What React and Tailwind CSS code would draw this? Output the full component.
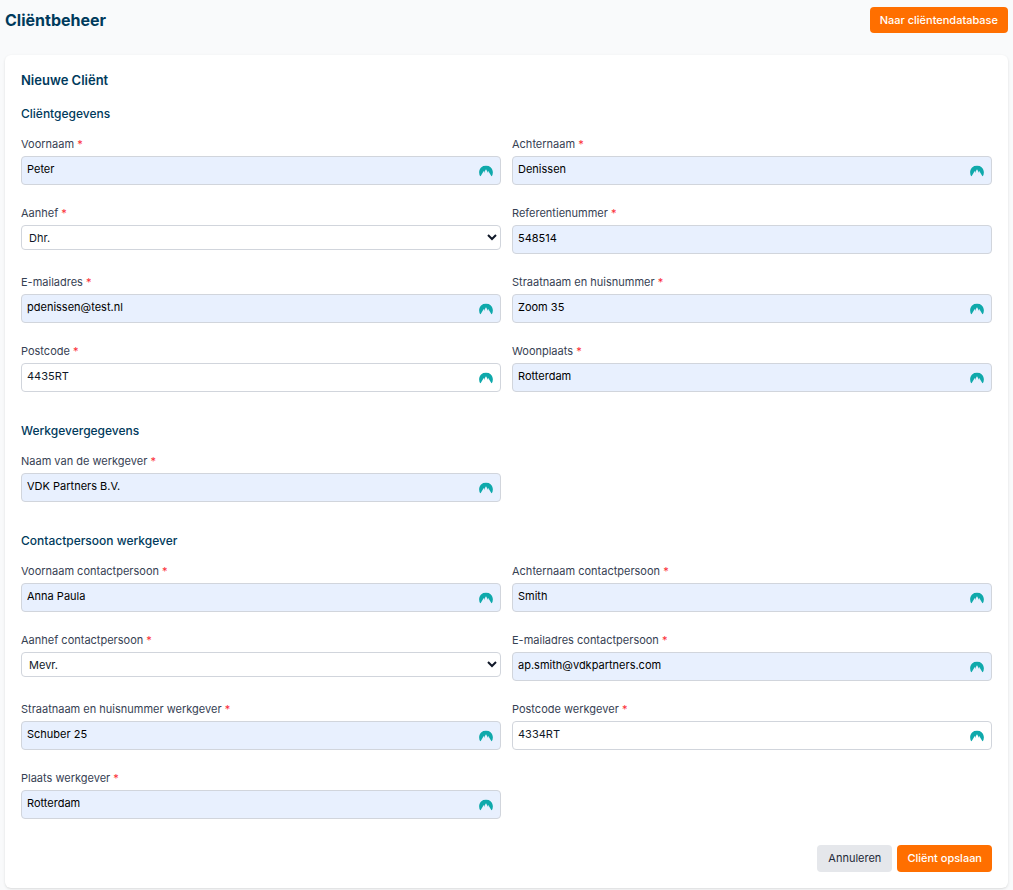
import { useId } from "react";

function VaultIcon() {
  return (
    <svg
      viewBox="0 2.4 24 19.2"
      aria-hidden="true"
      className="pointer-events-none absolute top-1/2 right-2 h-[11px] w-[14px] -translate-y-1/2"
    >
      <path
        fill="#0fa9ab"
        d="M2.284 21.541A11.987 11.987 0 0 1 0 14.483C0 7.842 5.373 2.459 12 2.459c6.628 0 12 5.383 12 12.024a11.985 11.985 0 0 1-2.284 7.058l-5.764-9.378-.556.942.564 2.618L12 8.934l-2.450 4.145.571 2.645-2.077-3.556-5.760 9.373z"
      />
    </svg>
  );
}

function Label({ htmlFor, children }) {
  return (
    <label htmlFor={htmlFor} className="block text-[11px] leading-4 text-gray-700">
      {children} <span className="text-red-500">*</span>
    </label>
  );
}

function TextField({ label, value, type = "text", plain = false, icon = true }) {
  const id = useId();
  return (
    <div>
      <Label htmlFor={id}>{label}</Label>
      <div className="relative mt-1">
        <input
          id={id}
          type={type}
          defaultValue={value}
          required
          className={`block h-[29px] w-full rounded-[4px] border border-gray-300 px-[5px] pb-1 text-[11px] leading-4 outline-none focus:border-[#ff6f00] ${
            plain ? "bg-white text-gray-900" : "bg-[#e8f0fe] text-black"
          }`}
        />
        {icon && <VaultIcon />}
      </div>
    </div>
  );
}

function SelectField({ label, value }) {
  const id = useId();
  return (
    <div>
      <Label htmlFor={id}>{label}</Label>
      <select
        id={id}
        defaultValue={value}
        className="mt-1 block h-[25px] w-full rounded-[4px] border border-gray-300 bg-white px-[3px] text-[11px] text-gray-900"
      >
        <option>Dhr.</option>
        <option>Mevr.</option>
      </select>
    </div>
  );
}

function Section({ title, children }) {
  return (
    <section>
      <h3 className="mb-3 text-xs leading-5 font-medium text-[#003a5c]">{title}</h3>
      <div className="grid grid-cols-2 gap-x-[11px] gap-y-5">{children}</div>
    </section>
  );
}

export default function App() {
  return (
    <div className="min-h-screen bg-gray-50 px-[5px] pt-[7px] pb-0.5 font-['Inter',sans-serif]">
      <header className="mb-[22px] flex items-center justify-between">
        <h1 className="text-base leading-6 font-bold text-[#003a5c]">Cliëntbeheer</h1>
        <button
          type="button"
          className="h-[26px] rounded-[4px] bg-[#ff6f00] px-2.5 text-[11px] font-medium text-white"
        >
          Naar cliëntendatabase
        </button>
      </header>

      <main className="rounded-md bg-white p-4 shadow">
        <h2 className="mb-[15px] text-[13px] leading-[18px] font-semibold text-[#003a5c]">
          Nieuwe Cliënt
        </h2>
        <form onSubmit={(e) => e.preventDefault()}>
          <div className="flex flex-col gap-[29px]">
            <Section title="Cliëntgegevens">
              <TextField label="Voornaam" value="Peter" />
              <TextField label="Achternaam" value="Denissen" />
              <SelectField label="Aanhef" value="Dhr." />
              <TextField label="Referentienummer" value="548514" icon={false} />
              <TextField label="E-mailadres" value="pdenissen@test.nl" type="email" />
              <TextField label="Straatnaam en huisnummer" value="Zoom 35" />
              <TextField label="Postcode" value="4435RT" plain />
              <TextField label="Woonplaats" value="Rotterdam" />
            </Section>
            <Section title="Werkgevergegevens">
              <TextField label="Naam van de werkgever" value="VDK Partners B.V." />
            </Section>
            <Section title="Contactpersoon werkgever">
              <TextField label="Voornaam contactpersoon" value="Anna Paula" />
              <TextField label="Achternaam contactpersoon" value="Smith" />
              <SelectField label="Aanhef contactpersoon" value="Mevr." />
              <TextField
                label="E-mailadres contactpersoon"
                value="ap.smith@vdkpartners.com"
                type="email"
              />
              <TextField label="Straatnaam en huisnummer werkgever" value="Schuber 25" />
              <TextField label="Postcode werkgever" value="4334RT" plain />
              <TextField label="Plaats werkgever" value="Rotterdam" />
            </Section>
          </div>
          <div className="mt-[26px] flex justify-end gap-[5px]">
            <button
              type="button"
              className="h-[27px] rounded-[4px] bg-gray-200 px-[11px] text-[11px] font-normal text-gray-800"
            >
              Annuleren
            </button>
            <button
              type="submit"
              className="h-[27px] rounded-[4px] bg-[#ff6f00] px-2.5 text-[11px] font-medium text-white"
            >
              Cliënt opslaan
            </button>
          </div>
        </form>
      </main>
    </div>
  );
}
